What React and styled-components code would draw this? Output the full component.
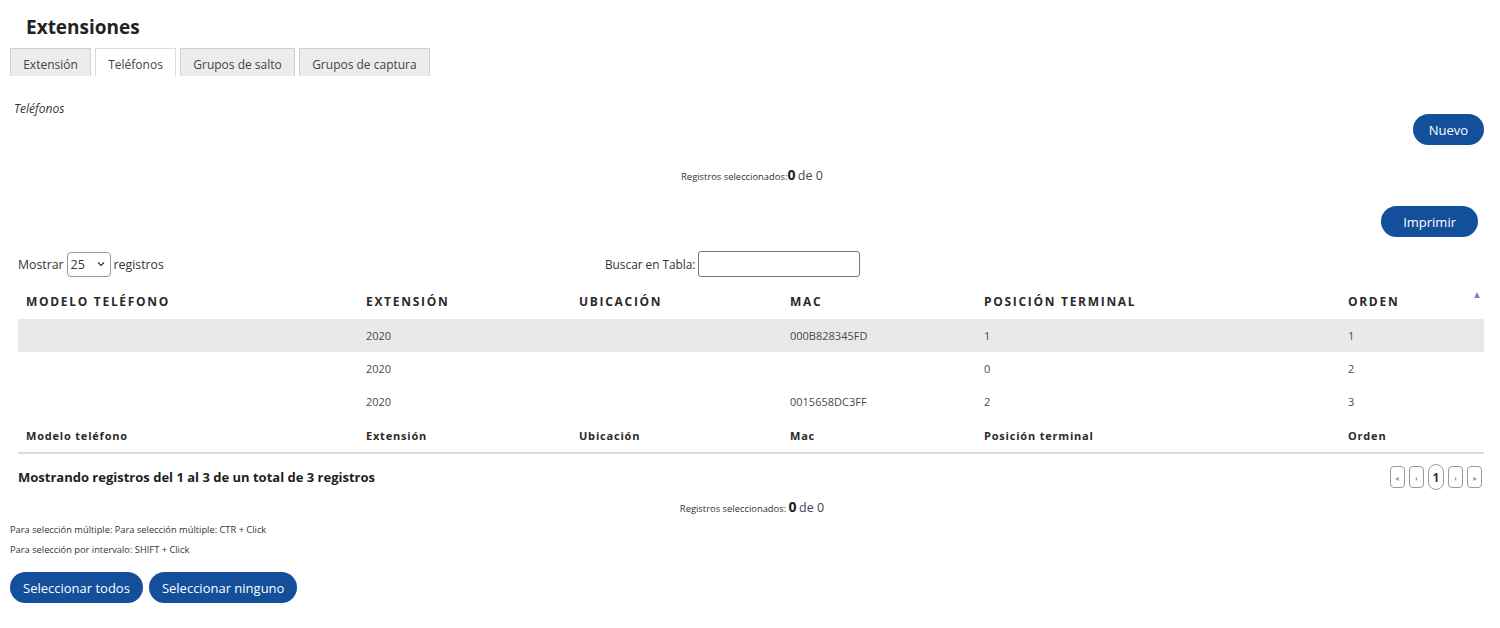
import React from "react";
import styled, { createGlobalStyle } from "styled-components";

const Global = createGlobalStyle`
  html, body { margin: 0; padding: 0; background: #fff; }
  body { font-family: "Open Sans", "Liberation Sans", sans-serif; color: #333; }
  * { box-sizing: border-box; }
`;

const Page = styled.div`
  width: 1500px;
  padding: 0 16px 0 10px;
`;

const Title = styled.h2`
  margin: 0;
  padding: 15px 0 0 16px;
  height: 48px;
  line-height: 24px;
  font-size: 19px;
  font-weight: 700;
  color: #222;
`;

const Tabs = styled.div`
  display: flex;
  gap: 4px;
  height: 28px;
`;

const Tab = styled.div`
  height: 28px;
  padding: 3px 12.2px 0;
  display: flex;
  align-items: center;
  font-size: 12px;
  color: #444;
  background: ${(p) => (p.$active ? "#fff" : "#ececec")};
  border: 1px solid ${(p) => (p.$active ? "#dcdcdc" : "#d0d0d0")};
  border-bottom: none;
`;

const Section = styled.div`
  padding: 24px 0 0 4px;
  font-size: 12px;
  font-style: italic;
  color: #333;
  height: 38px;
`;

const RightRow = styled.div`
  display: flex;
  justify-content: flex-end;
  padding-right: ${(p) => p.$pr || 0}px;
  margin-top: ${(p) => p.$mt || 0}px;
`;

const Pill = styled.button`
  height: 31px;
  border: none;
  border-radius: 16px;
  background: #134f9a;
  color: #fff;
  font-family: "Open Sans", sans-serif;
  font-size: ${(p) => p.$fs || 13}px;
  padding: 0 ${(p) => p.$px || 16}px;
  cursor: pointer;
`;

const Counter = styled.div`
  text-align: center;
  color: #333;
  font-size: 9.4px;
  margin-top: ${(p) => p.$mt || 0}px;
  height: 20px;
  line-height: 20px;
  padding-left: 10px;
  b { font-size: 14px; font-weight: 700; color: #222; }
  span { font-size: 12.5px; color: #445; }
`;

const Controls = styled.div`
  display: flex;
  align-items: center;
  margin: 13px 0 0 8px;
  height: 28px;
  color: #333;
`;

const Left = styled.div`
  display: flex;
  align-items: center;
  gap: 3px;
  width: 587px;
  font-size: 12.3px;
`;

const Select = styled.div`
  width: 44px;
  height: 25px;
  border: 1px solid #999;
  border-radius: 4px;
  display: flex;
  align-items: center;
  justify-content: space-between;
  padding: 0 5px 0 3px;
  font-size: 12.5px;
  color: #333;
`;

const Search = styled.div`
  display: flex;
  align-items: center;
  gap: 3px;
  font-size: 11.8px;
`;

const Input = styled.div`
  width: 162px;
  height: 26px;
  border: 1px solid #777;
  border-radius: 3px;
`;

const Table = styled.table`
  width: 1466px;
  margin: 6px 0 0 8px;
  border-collapse: collapse;
  table-layout: fixed;
`;

const Th = styled.th`
  text-align: left;
  padding: 0 8px;
  height: 35px;
  font-size: 12px;
  font-weight: 700;
  letter-spacing: 1.7px;
  color: #2a2a2a;
  text-transform: uppercase;
  position: relative;
`;

const SortArrow = styled.span`
  position: absolute;
  right: 4px;
  top: 8px;
  width: 0;
  height: 0;
  border-left: 3.5px solid transparent;
  border-right: 3.5px solid transparent;
  border-bottom: 6px solid #8080d8;
`;

const Tr = styled.tr`
  background: ${(p) => (p.$hl ? "#e9e9e9" : "transparent")};
`;

const Td = styled.td`
  padding: 0 8px;
  height: 33px;
  font-size: 11px;
  color: #4a4a4a;
`;

const Tf = styled.td`
  padding: 0 8px;
  height: 35px;
  font-size: 11px;
  font-weight: 700;
  letter-spacing: 0.8px;
  color: #2a2a2a;
  border-bottom: 2px solid #ddd;
`;

const Info = styled.div`
  display: flex;
  align-items: center;
  justify-content: space-between;
  margin: 10px 0 0 8px;
  height: 26px;
`;

const InfoText = styled.div`
  font-size: 13px;
  font-weight: 700;
  color: #1e1e1e;
`;

const Pager = styled.div`
  display: flex;
  align-items: center;
  gap: 4px;
  padding-right: 2px;
`;

const PageBtn = styled.div`
  width: ${(p) => (p.$cur ? 16 : 15)}px;
  height: ${(p) => (p.$cur ? 26 : 22)}px;
  border: 1px solid #999;
  border-radius: ${(p) => (p.$cur ? 8 : 4)}px;
  display: flex;
  align-items: center;
  justify-content: center;
  font-size: ${(p) => (p.$cur ? 12 : 8)}px;
  font-weight: ${(p) => (p.$cur ? 700 : 400)};
  color: #333;
`;

const Hint = styled.div`
  font-size: 9.3px;
  color: #333;
  height: 20px;
  line-height: 20px;
  margin-top: ${(p) => p.$mt || 0}px;
`;

const BtnRow = styled.div`
  display: flex;
  gap: 6px;
  margin-top: 12px;
`;

const cols = [340, 213, 211, 194, 364, 144];
const heads = ["Modelo teléfono", "Extensión", "Ubicación", "Mac", "Posición terminal", "Orden"];
const rows = [
  ["", "2020", "", "000B828345FD", "1", "1"],
  ["", "2020", "", "", "0", "2"],
  ["", "2020", "", "0015658DC3FF", "2", "3"],
];

export default function App() {
  return (
    <Page>
      <Global />
      <Title>Extensiones</Title>
      <Tabs>
        <Tab>Extensión</Tab>
        <Tab $active>Teléfonos</Tab>
        <Tab>Grupos de salto</Tab>
        <Tab>Grupos de captura</Tab>
      </Tabs>
      <Section>Teléfonos</Section>
      <RightRow>
        <Pill>Nuevo</Pill>
      </RightRow>
      <Counter $mt={20}>
        Registros seleccionados:<b>0</b> <span>de 0</span>
      </Counter>
      <RightRow $pr={6} $mt={21}>
        <Pill $px={22}>Imprimir</Pill>
      </RightRow>
      <Controls>
        <Left>
          Mostrar
          <Select>
            25
            <svg width="8" height="6" viewBox="0 0 8 6">
              <path d="M1 1.5 L4 4.5 L7 1.5" fill="none" stroke="#333" strokeWidth="1.2" />
            </svg>
          </Select>
          registros
        </Left>
        <Search>
          Buscar en Tabla:
          <Input />
        </Search>
      </Controls>
      <Table>
        <colgroup>
          {cols.map((w, i) => (
            <col key={i} style={{ width: w }} />
          ))}
        </colgroup>
        <thead>
          <tr>
            {heads.map((h, i) => (
              <Th key={h}>
                {h}
                {i === heads.length - 1 && <SortArrow />}
              </Th>
            ))}
          </tr>
        </thead>
        <tbody>
          {rows.map((r, i) => (
            <Tr key={i} $hl={i === 0}>
              {r.map((c, j) => (
                <Td key={j}>{c}</Td>
              ))}
            </Tr>
          ))}
        </tbody>
        <tfoot>
          <tr>
            {heads.map((h) => (
              <Tf key={h}>{h}</Tf>
            ))}
          </tr>
        </tfoot>
      </Table>
      <Info>
        <InfoText>Mostrando registros del 1 al 3 de un total de 3 registros</InfoText>
        <Pager>
          <PageBtn>«</PageBtn>
          <PageBtn>‹</PageBtn>
          <PageBtn $cur>1</PageBtn>
          <PageBtn>›</PageBtn>
          <PageBtn>»</PageBtn>
        </Pager>
      </Info>
      <Counter $mt={7}>
        Registros seleccionados: <b>0</b> <span>de 0</span>
      </Counter>
      <Hint $mt={3}>Para selección múltiple: Para selección múltiple: CTR + Click</Hint>
      <Hint>Para selección por intervalo: SHIFT + Click</Hint>
      <BtnRow>
        <Pill $fs={13} $px={13}>Seleccionar todos</Pill>
        <Pill $fs={13} $px={13}>Seleccionar ninguno</Pill>
      </BtnRow>
    </Page>
  );
}
